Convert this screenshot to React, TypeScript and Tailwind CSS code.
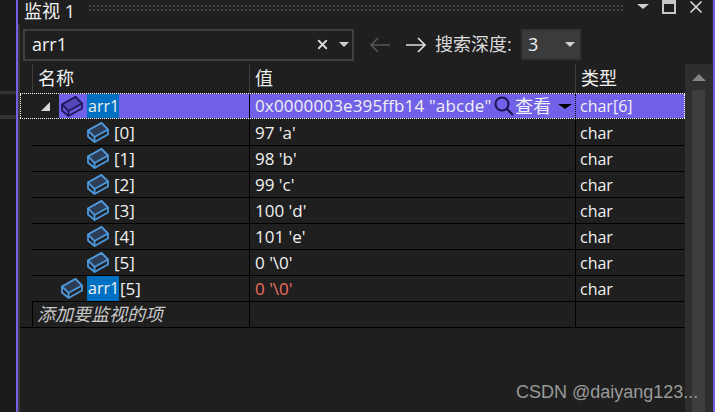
import React from 'react';
import { X } from 'lucide-react';

const uiFont = { fontFamily: '"Open Sans", "Noto Sans CJK SC", sans-serif' };

const Cube = ({ dark = false }: { dark?: boolean }) => {
  const stroke = dark ? '#20185c' : '#4e98dc';
  const fill = dark ? '#5446bb' : '#2c3d55';
  return (
    <svg width="22" height="21" viewBox="0 0 22 21" fill="none" className="shrink-0">
      <path d="M1 8.5 L14.5 1 L21 7.5 L21 12.5 L7.5 20 L1 14.5 Z" fill={dark ? '#6a5ad8' : '#1f2328'} stroke={stroke} strokeWidth="1.8" />
      <path d="M1 8.5 L14.5 1 L21 7.5 L7.5 15 Z" fill={fill} stroke={stroke} strokeWidth="1.8" />
      <path d="M7.5 15 L7.5 20" stroke={stroke} strokeWidth="1.8" />
    </svg>
  );
};

const Caret = ({ className = '' }: { className?: string }) => (
  <span className={`w-0 h-0 border-x-[5px] border-x-transparent border-t-[5px] ${className}`} />
);

const rows = [
  { name: '[0]', value: "97 'a'" },
  { name: '[1]', value: "98 'b'" },
  { name: '[2]', value: "99 'c'" },
  { name: '[3]', value: "100 'd'" },
  { name: '[4]', value: "101 'e'" },
  { name: '[5]', value: "0 '\\0'" },
];

const App = () => {
  return (
    <div className="w-[715px] h-[412px] overflow-hidden bg-[#1f1f1f] flex text-[#f1f1f1] relative" style={uiFont}>
      {/* left edge of the IDE */}
      <div className="w-4 shrink-0 flex flex-col bg-[#1b1b1b]">
        <div className="h-[91px] shrink-0" />
        <div className="h-[3px] bg-[#333333] shrink-0" />
        <div className="h-[21px] shrink-0" />
        <div className="h-[4px] bg-[#333333] shrink-0" />
      </div>
      <div className="w-[2px] shrink-0 bg-[#7160e8]" />
      <div className="w-[2px] shrink-0 flex flex-col">
        <div className="h-6 shrink-0" />
        <div className="flex-1 bg-[#3a3a3a]" />
      </div>

      <div className="w-[692px] shrink-0 flex flex-col">
        {/* title bar */}
        <div className="h-[22px] shrink-0 flex items-center pl-1">
          <span className="text-[18px] leading-none w-[64px]">监视 1</span>
          <div className="flex-1 h-2 -mt-[7px] bg-[radial-gradient(#444444_1.3px,transparent_1.3px)] bg-[length:4px_4px]" />
          <div className="w-[88px] h-full flex items-start pl-[13px]">
            <Caret className="mt-[4px] border-x-[6px] border-t-[#d0d0d0]" />
            <div className="ml-[13px] w-[14px] h-[14px] border-2 border-t-[4px] border-[#c8c8c8] bg-[#1f1f1f]" />
            <X size={20} strokeWidth={2} className="ml-[10px] -mt-[3px] text-[#d8d8d8]" />
          </div>
        </div>

        {/* toolbar */}
        <div className="h-[42px] shrink-0 flex items-center pl-[3px] pt-[3px]">
          <div className="w-[331px] h-[32px] border-2 border-[#404040] flex items-center pl-[7px] pr-[3px] text-[18px]">
            <span className="flex-1">arr1</span>
            <X size={15} strokeWidth={3} className="text-[#d8d8d8]" />
            <Caret className="ml-[9px] border-t-[#d0d0d0]" />
          </div>
          <svg width="22" height="18" viewBox="0 0 22 18" fill="none" stroke="#555555" strokeWidth="1.6" className="ml-[15px]">
            <path d="M21 9 H2 M9 2 L2 9 L9 16" />
          </svg>
          <svg width="22" height="18" viewBox="0 0 22 18" fill="none" stroke="#e0e0e0" strokeWidth="1.6" className="ml-[14px]">
            <path d="M1 9 H20 M13 2 L20 9 L13 16" />
          </svg>
          <span className="ml-[8px] text-[18px] text-[#dcdcdc] w-[86px] whitespace-nowrap">搜索深度:</span>
          <div className="w-[60px] h-[31px] bg-[#3b3b3b] border-2 border-[#333333] flex items-center pl-[5px] pr-[4px] justify-between text-[18px]">
            <span>3</span>
            <Caret className="border-t-[#d0d0d0]" />
          </div>
        </div>

        {/* watch table + scrollbar */}
        <div className="flex-1 min-h-0 flex">
          <div className="w-[665px] shrink-0 flex flex-col text-[16px]">
            <div className="h-[29px] shrink-0 flex text-[18px] text-[#f1f1f1]">
              <div className="w-3 shrink-0" />
              <div className="w-[217px] shrink-0 border-l border-[#3f3f3f] pl-[5px] leading-[28px]">名称</div>
              <div className="w-[326px] shrink-0 border-l border-[#3f3f3f] pl-[5px] leading-[28px]">值</div>
              <div className="flex-1 border-l border-[#3f3f3f] pl-[5px] leading-[28px]">类型</div>
            </div>

            {/* selected row */}
            <div className="h-[26px] shrink-0 flex border-y border-dotted border-white">
              <div className="w-[39px] shrink-0 border-l border-dotted border-white flex items-center pl-[20px]">
                <span className="w-0 h-0 border-l-[9px] border-l-transparent border-b-[9px] border-b-[#d8d8d8]" />
              </div>
              <div className="w-[190px] shrink-0 bg-[#7160e8] flex items-center pl-[2px]">
                <Cube dark />
                <span className="ml-[4px] h-[24px] w-[32px] pl-[1px] bg-[#0070c2] leading-[24px]">arr1</span>
              </div>
              <div className="w-[326px] shrink-0 bg-[#7160e8] border-l border-black pl-[5px] flex items-center whitespace-nowrap">
                <span className="text-[17px] tracking-[0.15px] w-[239px]">0x0000003e395ffb14 "abcde"</span>
                <svg width="20" height="20" viewBox="0 0 20 20" fill="none" stroke="#1c1450" strokeWidth="2" className="shrink-0">
                  <circle cx="8" cy="8" r="6.5" />
                  <path d="M12.5 12.5 L19 19" />
                </svg>
                <span className="ml-[1px] text-[18px]">查看</span>
                <Caret className="ml-[7px] border-x-[7px] border-t-black" />
              </div>
              <div className="flex-1 bg-[#7160e8] border-l border-black border-r border-r-white border-dotted pl-[4px] leading-[24px]">char[6]</div>
            </div>
            <div className="h-px shrink-0" />

            {rows.map((row) => (
              <div key={row.name} className="h-[26px] shrink-0 flex border-b border-black ml-3">
                <div className="w-[217px] shrink-0 flex items-center pl-[55px] gap-[5px]">
                  <Cube />
                  <span className="text-[17px]">{row.name}</span>
                </div>
                <div className="w-[326px] shrink-0 border-l border-black pl-[5px] leading-[26px] text-[17px]">{row.value}</div>
                <div className="flex-1 border-l border-black pl-[4px] leading-[26px]">char</div>
              </div>
            ))}

            <div className="h-[26px] shrink-0 flex border-b border-black ml-3">
              <div className="w-[217px] shrink-0 flex items-center pl-[29px]">
                <Cube />
                <span className="ml-[4px] h-[25px] w-[32px] pl-[1px] bg-[#0070c2] leading-[25px]">arr1</span>
                <span className="ml-px text-[17px]">[5]</span>
              </div>
              <div className="w-[326px] shrink-0 border-l border-black pl-[5px] leading-[26px] text-[17px] text-[#f0705f]">0 '\0'</div>
              <div className="flex-1 border-l border-black pl-[4px] leading-[26px]">char</div>
            </div>

            <div className="h-[26px] shrink-0 flex border-b border-black">
              <div className="w-3 shrink-0" />
              <div className="w-[217px] shrink-0 border-l border-black pl-[4px] italic text-[18px] text-[#c8c8c8] leading-[25px] whitespace-nowrap">添加要监视的项</div>
              <div className="w-[326px] shrink-0 border-l border-black" />
              <div className="flex-1 border-l border-black" />
            </div>
          </div>

          {/* scrollbar */}
          <div className="w-[27px] shrink-0 bg-[#2e2e2e] flex flex-col items-center">
            <span className="mt-[10px] w-0 h-0 border-x-[7px] border-x-transparent border-b-[7px] border-b-[#858585]" />
            <div className="mt-[9px] w-[13px] flex-1 bg-[#3e3e3e]" />
          </div>
        </div>
      </div>

      <div className="w-px shrink-0 bg-[#2a2a2a]" />
      <div className="w-[2px] shrink-0 bg-[#7160e8]" />

      {/* watermark */}
      <span className="absolute left-[516px] top-[380px] text-[18px] leading-6 text-[#9a9a9a] whitespace-nowrap" style={{ fontFamily: '"Liberation Sans", sans-serif' }}>
        CSDN @daiyang123...
      </span>
    </div>
  );
};

export default App;
